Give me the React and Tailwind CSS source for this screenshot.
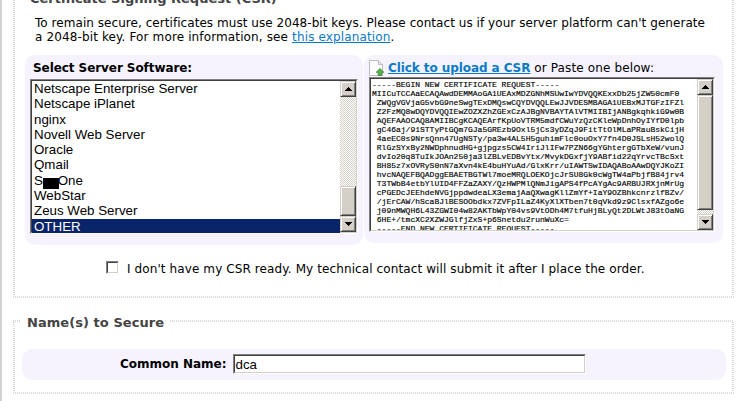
import React from "react";

const servers = [
  "Netscape Enterprise Server",
  "Netscape iPlanet",
  "nginx",
  "Novell Web Server",
  "Oracle",
  "Qmail",
  "SunOne",
  "WebStar",
  "Zeus Web Server",
  "OTHER",
];

const request = `-----BEGIN NEW CERTIFICATE REQUEST-----
MIICuTCCAaECAQAwdDEMMAoGA1UEAxMDZGNhMSUwIwYDVQQKExxDb25jZW50cmF0
 ZWQgVGVjaG5vbG9neSwgTExDMQswCQYDVQQLEwJJVDESMBAGA1UEBxMJTGFzIFZl
 Z2FzMQ8wDQYDVQQIEwZOZXZhZGExCzAJBgNVBAYTAlVTMIIBIjANBgkqhkiG9w0B
 AQEFAAOCAQ8AMIIBCgKCAQEArfKpUoVTRM5mdfCWuYzQzCKleWpDnhOyIYfD0lpb
 gC46aj/91STTyPtGQm7GJa5GREzb9Oxl5jCs3yDZqJ9FitTtOlMLaPRauBskCijH
 4aeEC0s9NrsQnn47UgNSTy/pa3w4AL5H5guhimFlc0ouOxY7fn4D0JSLsH52wolQ
 RlGzSYxBy2NWDphnudHG+gjpgzs5CW4IriJlIFw7PZN66gYGhtergGTbXeW/vunJ
 dvIo20q8TuIkJOAn250ja3lZBLvEDBvYtx/MvykDGxfjY9ABfid22qYrvcTBcSxt
 BH85z7xOVRyS0nN7aXvn4kE4buHYuAd/GlxKrr/uIAWTSwIDAQABoAAwDQYJKoZI
 hvcNAQEFBQADggEBAETBGTWl7moeMRQLOEKOjcJrSU8Gk0cWgTW4aPbjfB84jrv4
 T3TWbB4etbYlUID4FFZaZAXY/QzHWPMlQNmJigAPS4fPcAYgAc9ARBUJRXjnMrUg
 cPGEDcJEEhdeNVGjppdwdeaLX3emajAaQXwagKllZmYf+IaY9OZBhkcnrzlfBZv/
 /jErCAW/hScaBJlBESOObdkx7ZVFpILaZ4KyXlXTben7t0qVkd9z9ClsxfAZgo6e
 j09nMWQH6L43ZGWI04w82AKTbWpY04vs9VtODh4M7tfuHjBLyQt2DLWtJ83tOaNG
 6HE+/tmcXC2XZWJGlfjZxS+p6Snetdu2runWuXc=
 -----END NEW CERTIFICATE REQUEST-----`;

function HDots({ className = "" }) {
  return (
    <div
      className={`h-[2px] shrink-0 bg-[repeating-linear-gradient(90deg,#d9d9d9_0_1px,#fff_1px_2px)] ${className}`}
    />
  );
}

function VDots() {
  return (
    <div className="w-[2px] shrink-0 bg-[repeating-linear-gradient(180deg,#d9d9d9_0_1px,#fff_1px_2px)]" />
  );
}

function Raised({ className = "", children }) {
  return (
    <div
      className={`flex w-full shrink-0 items-center justify-center border border-t-[#d4d0c8] border-l-[#d4d0c8] border-r-[#404040] border-b-[#404040] bg-[#d4d0c8] shadow-[inset_1px_1px_0_#fff,inset_-1px_-1px_0_#808080] ${className}`}
    >
      {children}
    </div>
  );
}

function Arrow({ down }) {
  return (
    <svg width="7" height="4" viewBox="0 0 7 4" shapeRendering="crispEdges" className={down ? "rotate-180" : ""}>
      <path d="M3 0h1v1h1v1h1v1h1v1H0V3h1V2h1V1h1z" fill="#000" />
    </svg>
  );
}

function ScrollBar({ before, thumb, after }) {
  return (
    <div className="flex w-4 shrink-0 flex-col bg-[repeating-conic-gradient(#d4d0c8_0_25%,#fff_0_50%)] bg-[length:2px_2px]">
      <Raised className="h-4">
        <Arrow />
      </Raised>
      <div className={before} />
      <Raised className={thumb} />
      <div className={after} />
      <Raised className="h-4">
        <Arrow down />
      </Raised>
    </div>
  );
}

const sunken =
  "border border-t-[#808080] border-l-[#808080] border-r-white border-b-white bg-white";
const inner =
  "border border-t-[#404040] border-l-[#404040] border-r-[#d4d0c8] border-b-[#d4d0c8]";

function UploadIcon() {
  return (
    <svg width="16" height="16" viewBox="0 0 16 16" className="shrink-0">
      <path d="M.5.5h9l4 4v11H.5z" fill="#fcfcfc" stroke="#bdbdbd" />
      <path d="M9.5.5v4h4" fill="#e4e4e4" stroke="#bdbdbd" />
      <path d="M11 8.5 14.8 12.3h-2v3.2H9.2v-3.2h-2z" fill="#57b14b" stroke="#3f8f3a" strokeWidth=".9" />
    </svg>
  );
}

export default function App() {
  return (
    <div className="flex h-[401px] w-[746px] overflow-hidden bg-white font-['DejaVu_Sans','Liberation_Sans',sans-serif] text-[12px] text-black">
      <div className="w-[2px] shrink-0 bg-[#d2d2d2]" />
      <div className="ml-[11px] w-[721px] shrink-0">
        <section>
          <div className="flex h-[296px]">
            <VDots />
            <div className="w-[717px]">
              <h2 className="-mt-[9px] ml-[15px] h-4 whitespace-nowrap text-[13px] leading-4 font-bold text-[#444]">
                Certificate Signing Request (CSR)
              </h2>
              <p className="mt-[9px] ml-5 h-[39px] leading-[14px] whitespace-nowrap">
                <span className="tracking-[0.05px]">
                  To remain secure, certificates must use 2048-bit keys. Please contact us if your server platform can't generate
                </span>
                <br />
                <span className="tracking-[0.13px]">
                  a 2048-bit key. For more information, see{" "}
                  <a className="text-[#0b7bc6] underline">this explanation</a>.
                </span>
              </p>
              <div className="ml-[10px] flex items-start gap-px">
                <div className="h-[190px] w-[338px] rounded-[10px] bg-[#f6f3ff] pl-[5px]">
                  <div className="h-6 pt-[5px] pl-[3px] text-[12px] leading-4 font-bold tracking-[-0.07px]">
                    Select Server Software:
                  </div>
                  <div className={`h-[155px] w-[328px] ${sunken}`}>
                    <div className={`flex h-full ${inner}`}>
                      <ul className="h-[151px] grow font-['Liberation_Sans',Arial,sans-serif] text-[13.33px] leading-[15px]">
                        {servers.map((s) => (
                          <li
                            key={s}
                            className={`relative pl-[2px] ${s === "OTHER" ? "h-[14px] bg-[#0a246a] text-white" : "h-[15.3px]"}`}
                          >
                            {s}
                            {s === "SunOne" && (
                              <span className="absolute top-[5px] left-[11px] h-[11px] w-4 bg-black" />
                            )}
                          </li>
                        ))}
                      </ul>
                      <ScrollBar before="grow" thumb="h-[30px]" after="h-0" />
                    </div>
                  </div>
                </div>
                <div className="h-[188px] w-[359px] rounded-[10px] bg-[#f6f3ff] pl-[5px]">
                  <div className="flex h-[22px] items-center pt-[3px] whitespace-nowrap">
                    <UploadIcon />
                    <span className="ml-[3px] tracking-[0.13px]">
                      <a className="font-bold tracking-[-0.08px] text-[#0b7bc6] underline">Click to upload a CSR</a> or Paste one below:
                    </span>
                  </div>
                  <div className={`h-[155px] w-[346px] ${sunken}`}>
                    <div className={`flex h-full ${inner}`}>
                      <pre className="grow overflow-hidden pt-px pl-px font-['Liberation_Mono','Courier_New',monospace] text-[8px] leading-[9px] [-webkit-text-stroke:0.15px_#000]">
                        {request}
                      </pre>
                      <ScrollBar before="h-0" thumb="grow" after="h-[4px]" />
                    </div>
                  </div>
                </div>
              </div>
              <label className="mt-4 ml-[91px] flex h-4 items-center whitespace-nowrap">
                <span className={`-mt-[3px] size-[13px] shrink-0 ${sunken}`}>
                  <span className={`block size-full ${inner}`} />
                </span>
                <span className="ml-2 tracking-[0.105px]">
                  I don't have my CSR ready. My technical contact will submit it after I place the order.
                </span>
              </label>
            </div>
            <VDots />
          </div>
          <HDots />
        </section>
        <section className="mt-[15px]">
          <div className="flex h-4 items-center">
            <HDots className="w-2" />
            <h2 className="w-[149px] shrink-0 pt-1 pl-[6px] text-[13px] leading-4 font-bold tracking-[0.05px] whitespace-nowrap text-[#444]">
              Name(s) to Secure
            </h2>
            <HDots className="grow" />
          </div>
          <div className="-mt-[7px] flex h-[70px] justify-between">
            <VDots />
            <div className="mt-[27px] flex h-[31px] w-[704px] items-center rounded-[10px] bg-[#f6f3ff]">
              <label className="-mt-[2px] w-[205px] text-right font-bold whitespace-nowrap">Common Name:</label>
              <div className={`-mt-px ml-[6px] h-5 w-[353px] ${sunken}`}>
                <div className={`h-full pl-px font-['Liberation_Sans',Arial,sans-serif] text-[13.33px] leading-[17px] ${inner}`}>
                  dca
                </div>
              </div>
            </div>
            <VDots />
          </div>
          <HDots />
        </section>
      </div>
    </div>
  );
}
